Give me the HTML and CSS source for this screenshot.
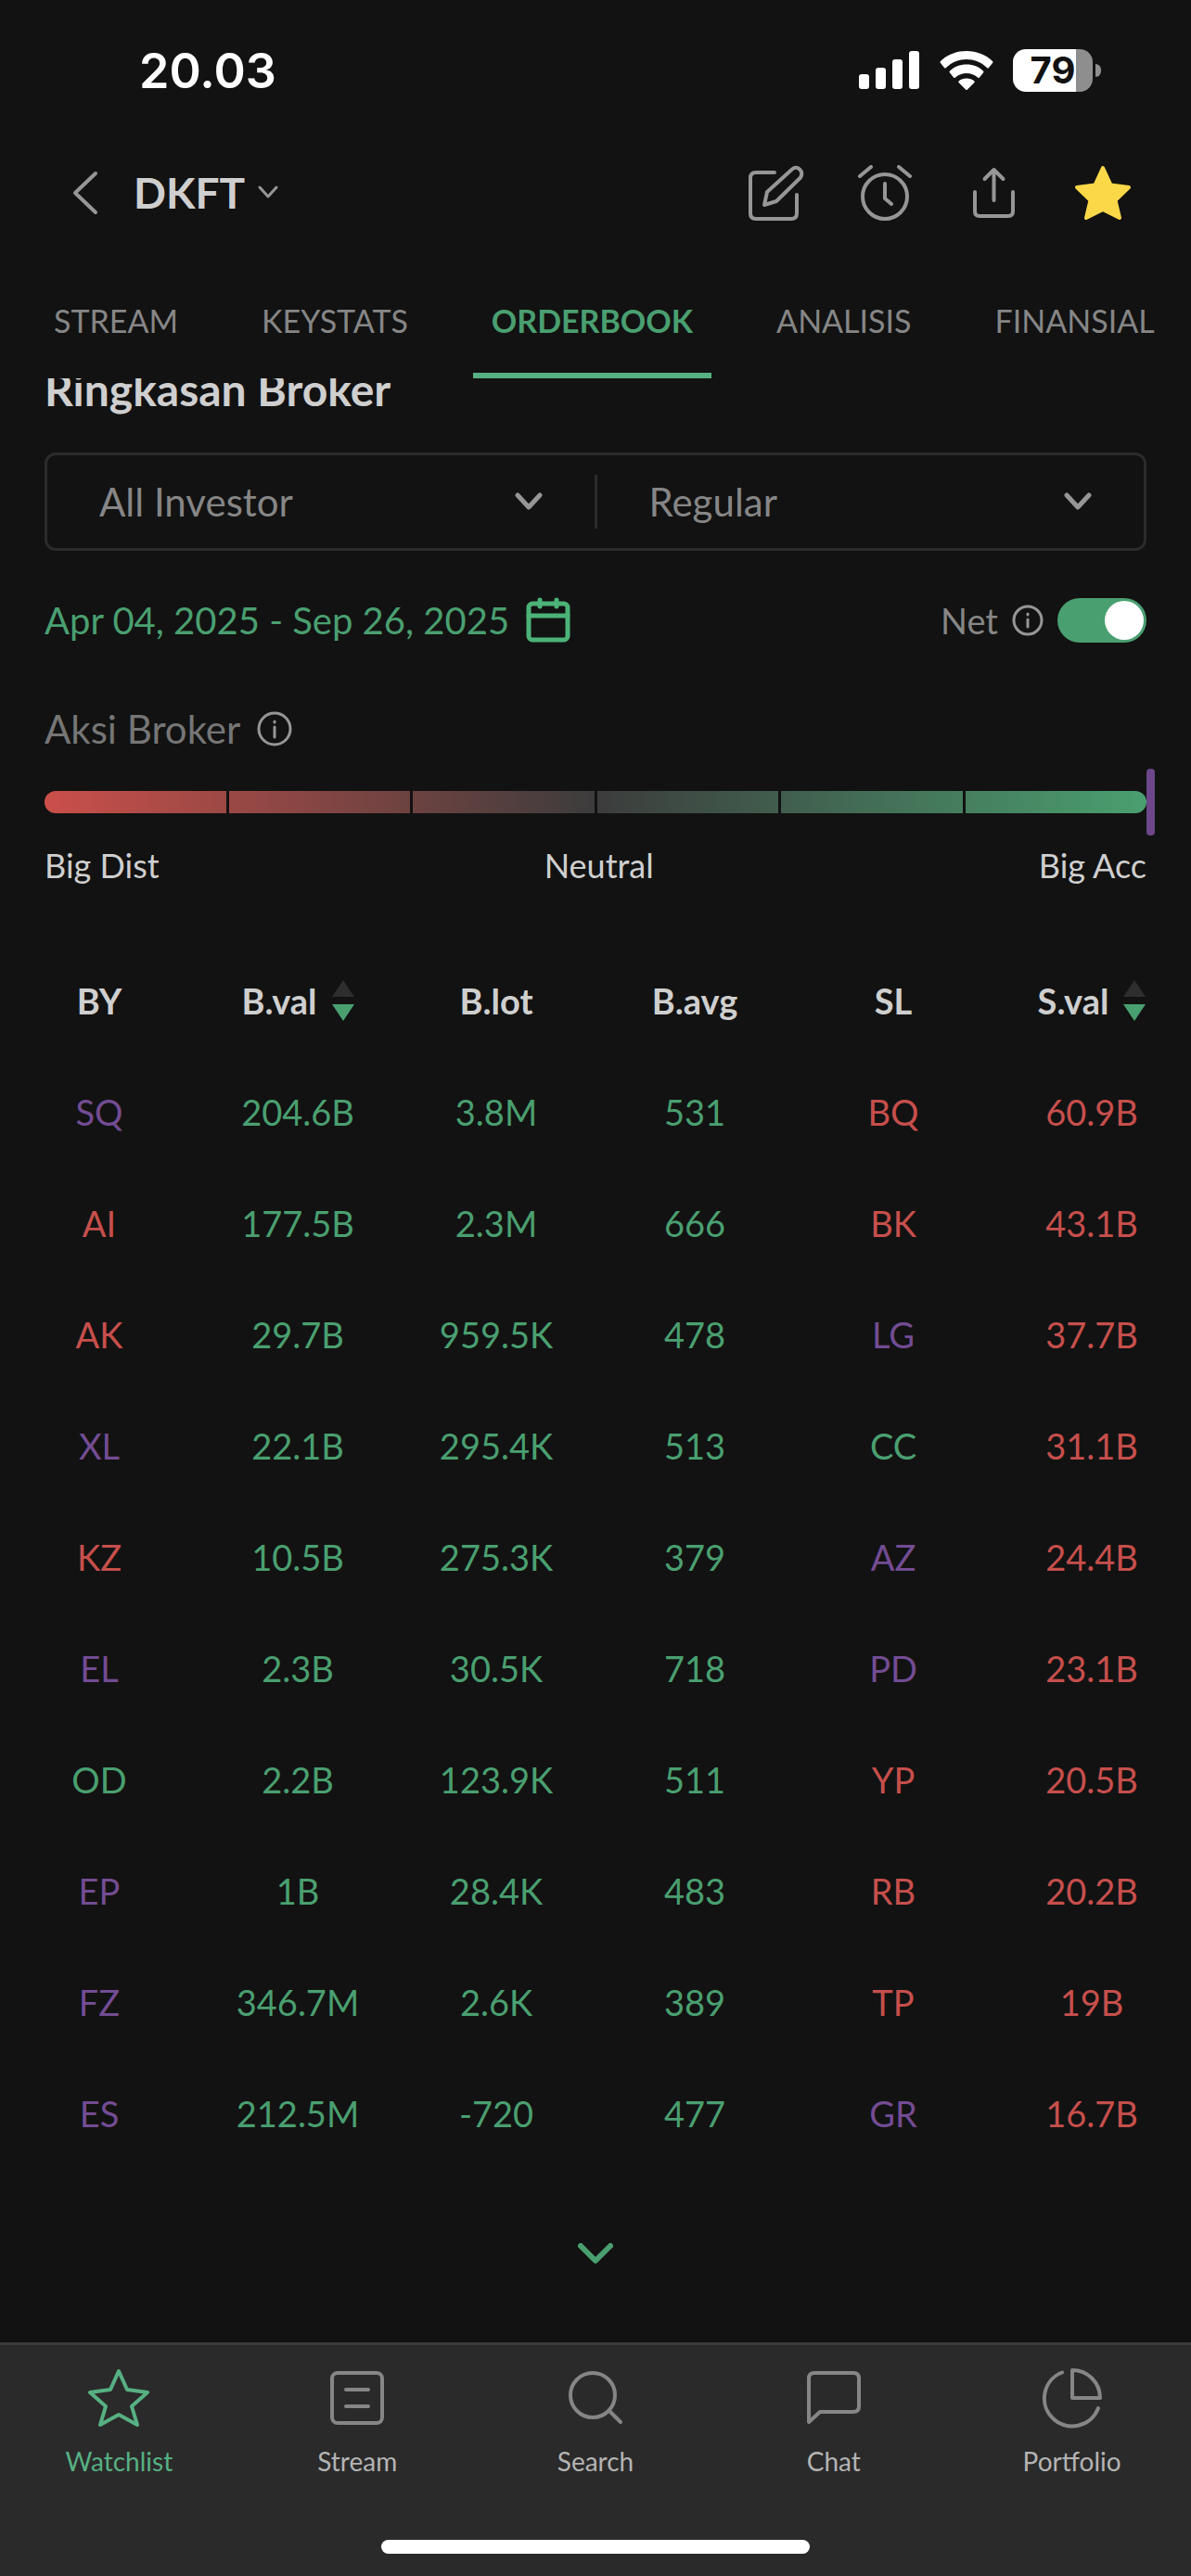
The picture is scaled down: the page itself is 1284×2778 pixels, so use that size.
FILE: index.html
```html
<!DOCTYPE html>
<html lang="id">
    <head>
        <meta charset="UTF-8" />
        <meta name="viewport" content="width=device-width, initial-scale=1.0" />
        <title>DKFT - Orderbook</title>
        <link rel="stylesheet" href="styles.css">
    </head>
    <body>
        <div class="status-bar">
            <span class="clock">20.03</span>
            <div class="status-icons">
                <svg width="66" height="42" viewBox="0 0 66 42" fill="#fff">
                    <rect x="0" y="25" width="11" height="16" rx="3" />
                    <rect x="18" y="18" width="11" height="23" rx="3" />
                    <rect x="36" y="9" width="11" height="32" rx="3" />
                    <rect x="54" y="0" width="11" height="41" rx="3" />
                </svg>
                <svg width="58" height="42" viewBox="0 0 58 42" fill="#fff">
                    <path d="M29 0C18 0 8 4 1 11q-1 1 0 2l4 5q1 1 2 0C13 12 21 9 29 9s16 3 22 9q1 1 2 0l4-5q1-1 0-2C50 4 40 0 29 0z" />
                    <path d="M29 14.500c-7 0-13.500 2.500-18 7q-1 1 0 2l4 5q1 1 2 0c3.500-3 7.500-4.500 12-4.500s8.500 1.500 12 4.500q1 1 2 0l4-5q1-1 0-2c-4.500-4.500-11-7-18-7z" />
                    <path d="M29 29.500c-3.200 0-6 1-8.200 2.800q-1 1 0 2l7.200 7.200q1 1 2 0l7.200-7.200q1-1 0-2C35 30.500 32.200 29.500 29 29.500z" />
                </svg>
                <div class="battery"><span>79</span></div>
            </div>
        </div>

        <header class="header">
            <button class="icon-btn" aria-label="Kembali">
                <svg width="28" height="48" viewBox="0 0 28 48"><path d="M25 3L3 24l22 21" /></svg>
            </button>
            <button class="symbol">
                DKFT
                <svg width="22" height="16" viewBox="0 0 22 16"><path d="M2 2l9 10 9-10" /></svg>
            </button>
            <div class="actions">
                <button class="icon-btn" aria-label="Catatan">
                    <svg width="60" height="60" viewBox="0 0 60 60">
                        <path d="M28 8H8q-6 0-6 6v38q0 6 6 6h38q6 0 6-6V32" />
                        <path d="M17 43l3-14L47 4.500q4-3.500 8 0t1 9L30 39z" />
                    </svg>
                </button>
                <button class="icon-btn" aria-label="Alarm">
                    <svg width="60" height="60" viewBox="0 0 60 60">
                        <circle cx="30" cy="34" r="24" />
                        <path d="M30 20v16l7 6M3 12L15 2M57 12L45 2" />
                    </svg>
                </button>
                <button class="icon-btn" aria-label="Bagikan">
                    <svg width="60" height="60" viewBox="0 0 60 60">
                        <path d="M10 29v21q0 5 5 5h31q5 0 5-5V29M30.500 38V5M20.500 15l10-10 10 10" />
                    </svg>
                </button>
                <button class="icon-btn" aria-label="Favorit">
                    <svg class="star" width="62" height="60" viewBox="0 0 62 60">
                        <path d="M31 3l8.500 18.500L59 24 44.500 38 49 57 31 48 13 57l4.500-19L3 24l19.500-2.500z" />
                    </svg>
                </button>
            </div>
        </header>

        <nav class="tabs">
            <a href="#stream">STREAM</a>
            <a href="#keystats">KEYSTATS</a>
            <a href="#orderbook" class="active">ORDERBOOK</a>
            <a href="#analisis">ANALISIS</a>
            <a href="#finansial">FINANSIAL</a>
        </nav>

        <main>
            <h2>Ringkasan Broker</h2>

            <div class="filters">
                <div class="filter">
                    <select aria-label="Investor">
                        <option>All Investor</option>
                    </select>
                    <svg width="30" height="20" viewBox="0 0 30 20"><path d="M3 3l12 13L27 3" /></svg>
                </div>
                <div class="filter">
                    <select aria-label="Papan">
                        <option>Regular</option>
                    </select>
                    <svg width="30" height="20" viewBox="0 0 30 20"><path d="M3 3l12 13L27 3" /></svg>
                </div>
            </div>

            <div class="date-row">
                <button class="date">
                    Apr 04, 2025 - Sep 26, 2025
                    <svg width="48" height="50" viewBox="0 0 48 50">
                        <rect x="3" y="7" width="42" height="39" rx="4" />
                        <path d="M3 20h42M15 3v7M33 3v7" />
                    </svg>
                </button>
                <div class="net">
                    <label for="net">Net</label>
                    <svg width="34" height="34" viewBox="0 0 34 34"><circle cx="17" cy="17" r="15" /><path d="M17 16v8M17 10v1" /></svg>
                    <input type="checkbox" id="net" checked />
                </div>
            </div>

            <div class="aksi">
                Aksi Broker
                <svg width="38" height="38" viewBox="0 0 38 38"><circle cx="19" cy="19" r="17" /><path d="M19 17v11M19 11v1" /></svg>
            </div>

            <div class="meter">
                <div class="track">
                    <i></i><i></i><i></i><i></i><i></i><i></i>
                </div>
                <span class="marker"></span>
            </div>
            <div class="meter-labels">
                <span>Big Dist</span>
                <span>Neutral</span>
                <span>Big Acc</span>
            </div>

            <table>
                <thead>
                    <tr>
                        <th>BY</th>
                        <th><button class="sort">B.val <svg width="24" height="44" viewBox="0 0 24 44"><path class="up" d="M12 0l12 18H0z" /><path class="down" d="M0 26h24L12 44z" /></svg></button></th>
                        <th>B.lot</th>
                        <th>B.avg</th>
                        <th>SL</th>
                        <th><button class="sort">S.val <svg width="24" height="44" viewBox="0 0 24 44"><path class="up" d="M12 0l12 18H0z" /><path class="down" d="M0 26h24L12 44z" /></svg></button></th>
                    </tr>
                </thead>
                <tbody>
                    <tr>
                        <td class="purple">SQ</td><td>204.6B</td><td>3.8M</td><td>531</td>
                        <td class="red">BQ</td><td class="red">60.9B</td>
                    </tr>
                    <tr>
                        <td class="red">AI</td><td>177.5B</td><td>2.3M</td><td>666</td>
                        <td class="red">BK</td><td class="red">43.1B</td>
                    </tr>
                    <tr>
                        <td class="red">AK</td><td>29.7B</td><td>959.5K</td><td>478</td>
                        <td class="purple">LG</td><td class="red">37.7B</td>
                    </tr>
                    <tr>
                        <td class="purple">XL</td><td>22.1B</td><td>295.4K</td><td>513</td>
                        <td>CC</td><td class="red">31.1B</td>
                    </tr>
                    <tr>
                        <td class="red">KZ</td><td>10.5B</td><td>275.3K</td><td>379</td>
                        <td class="purple">AZ</td><td class="red">24.4B</td>
                    </tr>
                    <tr>
                        <td class="purple">EL</td><td>2.3B</td><td>30.5K</td><td>718</td>
                        <td class="purple">PD</td><td class="red">23.1B</td>
                    </tr>
                    <tr>
                        <td>OD</td><td>2.2B</td><td>123.9K</td><td>511</td>
                        <td class="red">YP</td><td class="red">20.5B</td>
                    </tr>
                    <tr>
                        <td class="purple">EP</td><td>1B</td><td>28.4K</td><td>483</td>
                        <td class="red">RB</td><td class="red">20.2B</td>
                    </tr>
                    <tr>
                        <td class="purple">FZ</td><td>346.7M</td><td>2.6K</td><td>389</td>
                        <td class="red">TP</td><td class="red">19B</td>
                    </tr>
                    <tr>
                        <td class="purple">ES</td><td>212.5M</td><td>-720</td><td>477</td>
                        <td class="purple">GR</td><td class="red">16.7B</td>
                    </tr>
                </tbody>
            </table>

            <button class="more" aria-label="Lihat semua">
                <svg width="38" height="24" viewBox="0 0 38 24"><path d="M3 3l16 16L35 3" /></svg>
            </button>
        </main>

        <footer>
            <nav class="bottom-nav">
                <a href="#watchlist" class="active">
                    <svg width="66" height="66" viewBox="0 0 66 66"><path d="M33 4l9 20 22 3-17 15 6 20-20-11-20 11 6-20L2 27l22-3z" /></svg>
                    Watchlist
                </a>
                <a href="#feed">
                    <svg width="66" height="66" viewBox="0 0 66 66"><rect x="6" y="6" width="54" height="54" rx="6" /><path d="M21 24h24M21 42h24" /></svg>
                    Stream
                </a>
                <a href="#search">
                    <svg width="66" height="66" viewBox="0 0 66 66"><circle cx="30" cy="30" r="24" /><path d="M48 47l12 12" /></svg>
                    Search
                </a>
                <a href="#chat">
                    <svg width="66" height="66" viewBox="0 0 66 66"><path d="M6 59V12q0-6 6-6h42q6 0 6 6v30q0 6-6 6H18z" /></svg>
                    Chat
                </a>
                <a href="#portfolio">
                    <svg width="66" height="66" viewBox="0 0 66 66"><path d="M33 3v30h30A30 30 0 0 0 33 3z" /><path d="M22 5.500A30 30 0 1 0 61 44" /></svg>
                    Portfolio
                </a>
            </nav>
            <div class="home-indicator"></div>
        </footer>
    </body>
</html>
```

FILE: styles.css
```css
* {
    box-sizing: border-box;
}
body {
    display: flex;
    flex-direction: column;
    min-height: 100vh;
    margin: 0;
    background-color: #121212;
    color: #cfcfcf;
    font-family: Lato, 'Open Sans', sans-serif;
    font-size: 38px;
}
a {
    color: inherit;
    text-decoration: none;
}
button {
    display: flex;
    align-items: center;
    padding: 0;
    border: none;
    background: none;
    color: inherit;
    font: inherit;
    cursor: pointer;
}
svg {
    flex: none;
    fill: none;
    stroke: #969696;
    stroke-width: 4px;
    stroke-linecap: round;
    stroke-linejoin: round;
}

/* status bar */
.status-bar {
    display: flex;
    justify-content: space-between;
    align-items: center;
    height: 152px;
    padding: 0 96px 0 150px;
}
.clock {
    color: #fff;
    font-family: Inter, sans-serif;
    font-size: 52px;
    font-weight: 600;
}
.status-icons {
    display: flex;
    align-items: center;
    gap: 21px;
}
.status-icons svg {
    fill: #fff;
    stroke: none;
}
.battery {
    position: relative;
    width: 86px;
    height: 46px;
    margin-right: 10px;
    border-radius: 14px;
    background: linear-gradient(to right, #fff 79%, #8e8e8e 79%);
    color: #121212;
    font-family: Inter, sans-serif;
    font-size: 40px;
    font-weight: 700;
    line-height: 46px;
    text-align: center;
}
.battery::after {
    content: '';
    position: absolute;
    top: 16px;
    right: -9px;
    width: 6px;
    height: 14px;
    border-radius: 0 6px 6px 0;
    background-color: #8e8e8e;
}

/* header */
.header {
    display: flex;
    align-items: center;
    height: 112px;
    padding: 0 64px 0 78px;
}
.symbol {
    gap: 14px;
    margin-left: 38px;
    font-size: 46px;
    font-weight: bold;
    line-height: 52px;
}
.symbol svg {
    stroke-width: 3px;
}
.actions {
    display: flex;
    align-items: center;
    gap: 57px;
    margin-left: auto;
}
.star {
    fill: #fbd848;
    stroke: #fbd848;
}

/* tabs */
.tabs {
    display: flex;
    gap: 50px;
    padding: 0 38px;
    overflow: hidden;
    color: #868686;
    font-size: 34px;
    line-height: 44px;
}
.tabs a {
    padding: 60px 20px 34px;
    border-bottom: 6px solid transparent;
}
.tabs .active {
    border-color: #57b083;
    color: #4a9f70;
    font-weight: bold;
}

main {
    flex: 1;
    padding: 0 48px;
    overflow: hidden;
}
/* scrolled partly under the tabs */
h2 {
    margin: -14px 0 42px;
    font-size: 48px;
    line-height: 52px;
}

/* filters */
.filters {
    display: flex;
    align-items: center;
    height: 106px;
    border: 3px solid #2b2b2b;
    border-radius: 12px;
}
.filter {
    display: flex;
    align-items: center;
    flex: 1;
    height: 58px;
    padding: 0 56px;
}
.filter + .filter {
    border-left: 3px solid #2b2b2b;
}
.filter select {
    flex: 1;
    padding: 0;
    -webkit-appearance: none;
    appearance: none;
    border: none;
    outline: none;
    background: none;
    color: #868686;
    font: inherit;
    font-size: 42px;
}
.filter svg {
    stroke-width: 5px;
}

.date-row {
    display: flex;
    justify-content: space-between;
    align-items: center;
    height: 50px;
    margin-top: 50px;
}
.date {
    gap: 18px;
    color: #4a9f70;
    font-size: 40px;
}
.date svg {
    stroke: #4cb378;
    stroke-width: 5px;
}
.net {
    display: flex;
    align-items: center;
    gap: 15px;
    color: #868686;
}
.net svg {
    stroke-width: 3px;
}
.net input {
    width: 96px;
    height: 48px;
    margin: 0;
    padding: 3px;
    -webkit-appearance: none;
    appearance: none;
    border-radius: 24px;
    background-color: #4a9f70;
    cursor: pointer;
}
.net input::before {
    content: '';
    display: block;
    width: 42px;
    height: 42px;
    border-radius: 50%;
    background-color: #fff;
}
.net input:checked::before {
    margin-left: auto;
}

/* broker action meter */
.aksi {
    display: flex;
    align-items: center;
    gap: 18px;
    margin: 68px 0 43px;
    color: #767676;
    font-size: 42px;
    line-height: 48px;
}
.aksi svg {
    stroke-width: 3px;
}
.meter {
    position: relative;
}
.track {
    display: flex;
    height: 24px;
    border-radius: 12px;
    background: linear-gradient(to right, #cb4f4a, #3c3c3c 50%, #4a9f70);
}
.track i {
    flex: 1;
}
.track i + i {
    border-left: 3px solid #121212;
}
.marker {
    position: absolute;
    top: -24px;
    right: -9px;
    width: 9px;
    height: 72px;
    border-radius: 4px;
    background-color: #6d4789;
}
.meter-labels {
    display: flex;
    justify-content: space-between;
    margin-top: 34px;
    font-size: 36px;
    line-height: 44px;
}

/* broker table */
table {
    width: calc(100% + 96px);
    margin: 64px -48px 0;
    border-collapse: collapse;
    table-layout: fixed;
}
th,
td {
    height: 120px;
    padding: 0;
    text-align: center;
}
td {
    color: #4a9f70;
}
.red {
    color: #c64f4c;
}
.purple {
    color: #734c93;
}
.sort {
    gap: 16px;
    margin: 0 auto;
}
.sort svg {
    stroke: none;
}
.up {
    fill: #2e2e2e;
}
.down {
    fill: #4a9f70;
}
.more {
    margin: 62px auto 46px;
    padding: 18px;
}
.more svg {
    stroke: #4a9f70;
    stroke-width: 6px;
}

/* bottom bar */
footer {
    padding-bottom: 24px;
    border-top: 3px solid #3a3a3a;
    background-color: #2a2a2a;
}
.bottom-nav {
    display: flex;
    color: #b4b4b4;
    font-size: 28px;
    line-height: 34px;
}
.bottom-nav a {
    display: flex;
    flex: 1;
    flex-direction: column;
    align-items: center;
    gap: 18px;
    padding-top: 24px;
}
.bottom-nav svg {
    stroke: #868686;
}
.bottom-nav .active {
    color: #57b083;
}
.bottom-nav .active svg {
    stroke: #57b083;
}
.home-indicator {
    width: 36%;
    height: 15px;
    margin: 68px auto 0;
    border-radius: 8px;
    background-color: #fff;
}
```
